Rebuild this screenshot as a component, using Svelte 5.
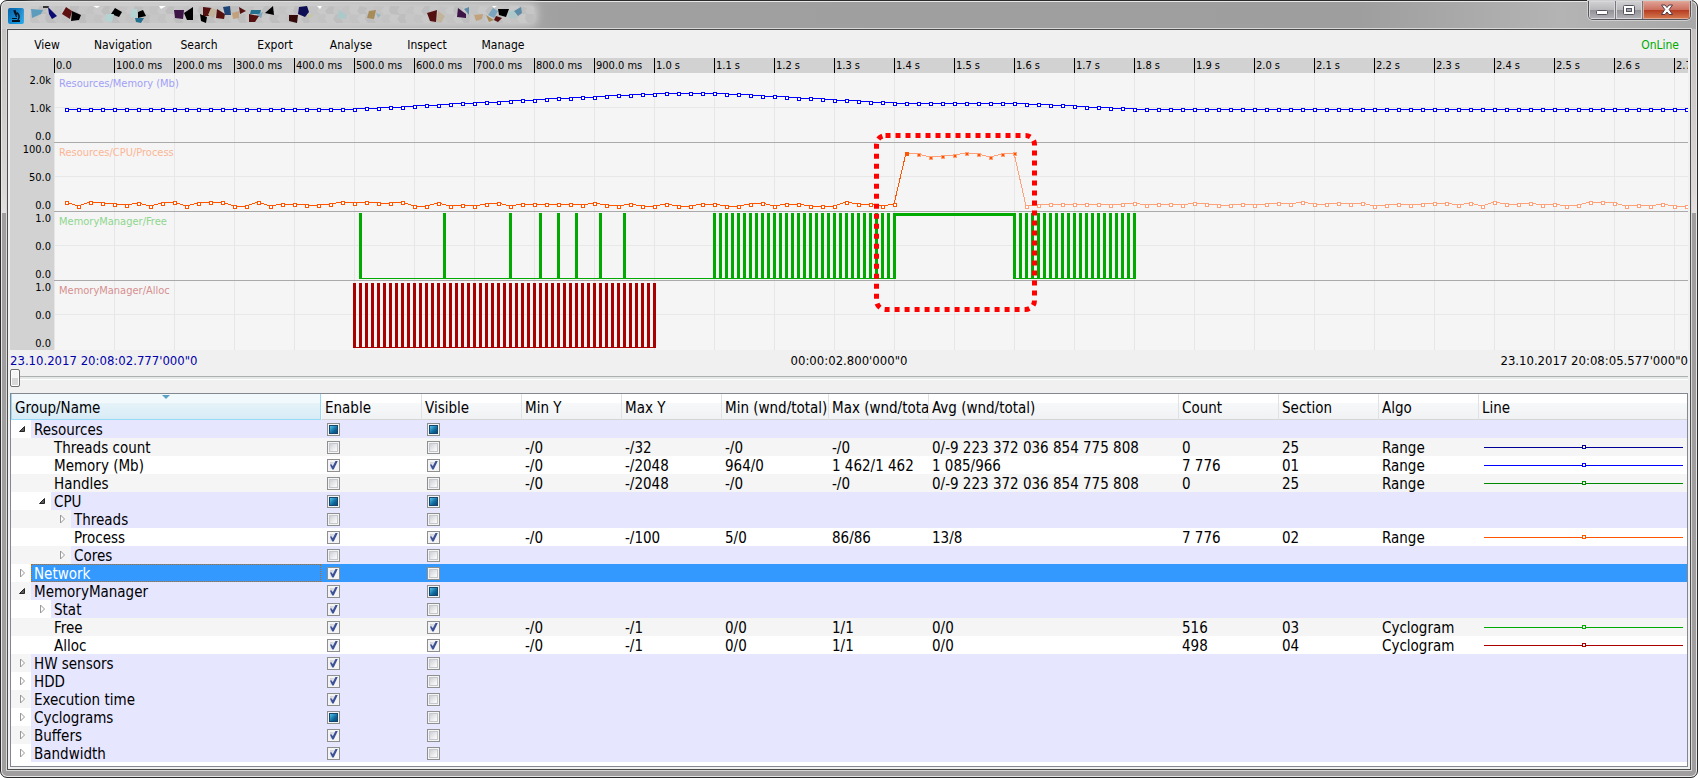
<script>
    const menu = ["View", "Navigation", "Search", "Export", "Analyse", "Inspect", "Manage"];

    // ruler: one tick every 100 ms
    const ticks = Array.from({ length: 28 }, (_, i) => {
        if (i === 0) return "0.0";
        return i < 10 ? `${i}00.0 ms` : `${(i / 10).toFixed(1)} s`;
    });

    const scales = [
        ["2.0k", "1.0k", "0.0"],
        ["100.0", "50.0", "0.0"],
        ["1.0", "0.0", "0.0"],
        ["1.0", "0.0", "0.0"]
    ];

    const panels = [
        { title: "Resources/Memory (Mb)", color: "#9f9ff5" },
        { title: "Resources/CPU/Process", color: "#fbb596" },
        { title: "MemoryManager/Free", color: "#8fd68f" },
        { title: "MemoryManager/Alloc", color: "#d69090" }
    ];
    const panelHeight = 69;
    const step = 12;

    function memoryY(k) {
        if (k <= 25) return 36;
        if (k <= 50) return 36 - (k - 25) * 0.62;
        if (k <= 55) return 20;
        if (k <= 70) return 20 + (k - 55) * 0.67;
        if (k <= 80) return 30;
        if (k <= 90) return 30 + (k - 80) * 0.6;
        return 36;
    }

    // idle load, one digit for each sample, higher digit = lower on screen
    const idleBefore =
        "0401231410" + "4100440422" + "3320101104" + "4143421422" +
        "2223134244" + "2442244214" + "2244402242";
    const idleAfter = "4322222" + "3213223123323212" + "022121" + "43232" + "11314" + "02213" + "24300" + "1434244";
    const load = [0, 1, 4, 3, 2, 0, 1, 4, 1, 0];

    const memory = Array.from({ length: 136 }, (_, i) => ({
        x: (i + 1) * step,
        y: Math.round(memoryY(i + 1))
    }));

    const cpu = memory.map(({ x }, i) => {
        if (i >= 70 && i < 80) return { x, y: 80 + load[i - 70] };
        const digit = i < 70 ? idleBefore[i] : idleAfter[i - 80];
        return { x, y: 129 + Number(digit) };
    });

    const toPoints = (list) => list.map((p) => `${p.x},${p.y}`).join(" ");

    const range = (from, to) => {
        const out = [];
        for (let x = from; x <= to; x += 6) out.push(x);
        return out;
    };
    const freeBars = [306, 390, 456, 486, 504, 522, 546, 570, ...range(660, 840), ...range(960, 1080)];
    const allocBars = range(300, 600);

    const columns = [
        "Group/Name", "Enable", "Visible", "Min Y", "Max Y", "Min (wnd/total)",
        "Max (wnd/total)", "Avg (wnd/total)", "Count", "Section", "Algo", "Line"
    ];

    // enable / visible: 0 = off, 1 = on, 2 = partly
    let rows = [
        { name: "Resources", level: 0, open: true, enable: 2, visible: 2 },
        { name: "Threads count", level: 1, enable: 0, visible: 0, line: "#000099", values: ["-/0", "-/32", "-/0", "-/0", "0/-9 223 372 036 854 775 808", "0", "25", "Range"] },
        { name: "Memory (Mb)", level: 1, enable: 1, visible: 1, line: "#0000ff", values: ["-/0", "-/2048", "964/0", "1 462/1 462", "1 085/966", "7 776", "01", "Range"] },
        { name: "Handles", level: 1, enable: 0, visible: 0, line: "#008800", values: ["-/0", "-/2048", "-/0", "-/0", "0/-9 223 372 036 854 775 808", "0", "25", "Range"] },
        { name: "CPU", level: 1, open: true, enable: 2, visible: 2 },
        { name: "Threads", level: 2, open: false, enable: 0, visible: 0 },
        { name: "Process", level: 2, enable: 1, visible: 1, line: "#ff5500", values: ["-/0", "-/100", "5/0", "86/86", "13/8", "7 776", "02", "Range"] },
        { name: "Cores", level: 2, open: false, enable: 0, visible: 0 },
        { name: "Network", level: 0, open: false, enable: 1, visible: 0, selected: true },
        { name: "MemoryManager", level: 0, open: true, enable: 1, visible: 2 },
        { name: "Stat", level: 1, open: false, enable: 1, visible: 0 },
        { name: "Free", level: 1, enable: 1, visible: 1, line: "#00aa00", values: ["-/0", "-/1", "0/0", "1/1", "0/0", "516", "03", "Cyclogram"] },
        { name: "Alloc", level: 1, enable: 1, visible: 1, line: "#aa0000", values: ["-/0", "-/1", "0/0", "1/1", "0/0", "498", "04", "Cyclogram"] },
        { name: "HW sensors", level: 0, open: false, enable: 1, visible: 0 },
        { name: "HDD", level: 0, open: false, enable: 1, visible: 0 },
        { name: "Execution time", level: 0, open: false, enable: 1, visible: 0 },
        { name: "Cyclograms", level: 0, open: false, enable: 2, visible: 0 },
        { name: "Buffers", level: 0, open: false, enable: 1, visible: 0 },
        { name: "Bandwidth", level: 0, open: false, enable: 1, visible: 0 }
    ];

    let position = 0;

    // scrambled caption: pale cells below, coloured shards on top
    const greys = ["#c9c9c9", "#c3c3c3", "#d3d3d3", "#c6c6c6", "#cdcdcd", "#bebebe", "#d6d6d6"];
    const cells = Array.from({ length: 126 }, (_, i) => {
        const x = (i % 63) * 8;
        const y = i < 63 ? 0 : 8;
        const j = (i * 7) % 5;
        return {
            fill: greys[(i * 5 + (i >> 2)) % greys.length],
            points: `${x + j},${y} ${x + 9},${y + (j % 3)} ${x + 11 - j},${y + 9} ${x + 3},${y + 10} ${x - 1},${y + 5}`
        };
    });
    const shards = [
        ["#5c9cbd", "1,3 13,4 11,8 2,12"],
        ["#333", "13,0 19,0 18,2 13,2"],
        ["#0b0b72", "18,1 27,10 22,13 19,8"],
        ["#5e1010", "32,8 36,1 42,5 40,13"],
        ["#000", "42,5 51,9 49,14 41,15"],
        ["#000", "85,2 92,6 89,11 81,8"],
        ["#b4d3d3", "76,8 84,8 82,16 75,15"],
        ["#b4d3d3", "102,3 107,3 107,12 100,11"],
        ["#000", "108,6 113,4 116,10 108,12"],
        ["#26708f", "105,12 114,12 111,17 106,16"],
        ["#fff", "63,0 70,0 67,2"],
        ["#fff", "129,0 136,0 131,3"],
        ["#3c1445", "144,4 154,4 153,13 145,12"],
        ["#000", "154,7 163,1 163,14 157,14"],
        ["#551010", "173,1 182,2 179,10 173,10"],
        ["#000", "170,8 177,11 176,17 171,15"],
        ["#c2b39b", "181,2 187,4 184,12 178,9"],
        ["#551010", "187,3 195,8 194,13 186,12"],
        ["#1f4577", "193,1 200,0 201,9 195,9"],
        ["#c2a27c", "202,7 209,5 209,12 203,13"],
        ["#551010", "209,1 216,5 210,8"],
        ["#26708f", "221,4 231,4 230,8 220,8"],
        ["#7ba5be", "226,9 233,6 231,12"],
        ["#551010", "219,8 229,10 225,16 219,16"],
        ["#000", "243,0 244,9 235,7"],
        ["#330b0b", "259,9 268,9 267,17 259,15"],
        ["#0e0e55", "269,1 277,0 279,6 275,11 268,8"],
        ["#fff", "287,0 292,0 290,3"],
        ["#c5c5a5", "277,8 284,9 279,13"],
        ["#adc8c8", "309,4 317,9 316,13 307,12"],
        ["#a78c5a", "339,5 346,4 344,13 337,12"],
        ["#96b4c2", "346,7 351,9 348,12"],
        ["#551010", "397,7 407,4 406,16 400,15"],
        ["#c2b39b", "408,5 415,10 411,17 407,15"],
        ["#3c1445", "428,2 436,8 436,12 427,11"],
        ["#5c8ba8", "434,3 439,1 439,9"],
        ["#c2a27c", "444,9 453,8 452,13 446,15"],
        ["#7ba5be", "458,9 463,2 468,5 464,12"],
        ["#fff", "462,0 467,0 464,2"],
        ["#000", "468,3 479,3 476,11 469,9"],
        ["#551010", "466,10 472,12 468,16 464,14"],
        ["#a78c5a", "456,9 464,14 459,16"],
        ["#adc8c8", "478,6 484,4 487,12 479,12"],
        ["#5c8ba8", "484,5 491,1 492,7 488,10"]
    ];
</script>

<div class="window">
    <header class="titlebar">
        <svg class="app-icon" width="16" height="16" viewBox="0 0 16 16" aria-hidden="true">
            <defs>
                <linearGradient id="icon-fill" x1="0" y1="0" x2="1" y2="1">
                    <stop offset="0" stop-color="#0a62a8" />
                    <stop offset="1" stop-color="#19a8f0" />
                </linearGradient>
            </defs>
            <rect width="16" height="16" rx="2" fill="url(#icon-fill)" />
            <g fill="#04121f">
                <path d="M5.200 2.600 L7.400 1.700 L9.600 7.200 L7.400 8.100 Z" />
                <path d="M7.500 8.300 L8.900 7.700 L9.200 8.800 L8 9.200 Z" />
                <rect x="4" y="10" width="5" height="1" />
                <rect x="4" y="12" width="8" height="2" />
            </g>
            <path d="M9 4.500 Q12.600 7.500 10 12" fill="none" stroke="#04121f" stroke-width="1.500" />
        </svg>
        <svg class="caption" width="504" height="17" aria-hidden="true">
            {#each cells as cell}
                <polygon points={cell.points} fill={cell.fill} />
            {/each}
            {#each shards as [fill, points]}
                <polygon {points} {fill} />
            {/each}
        </svg>
        <div class="window-buttons">
            <button class="min" aria-label="Minimize">
                <svg width="14" height="12"><rect x="1.500" y="6.500" width="11" height="4" rx="1" fill="#fff" stroke="#53535f" /></svg>
            </button>
            <button class="max" aria-label="Maximize">
                <svg width="14" height="12"><rect x="1.500" y="1.500" width="11" height="9" rx="1" fill="#fff" stroke="#53535f" /><rect x="4.500" y="4.500" width="5" height="3" fill="#a4a4ac" stroke="#53535f" /></svg>
            </button>
            <button class="close" aria-label="Close">
                <svg width="14" height="12"><path d="M1.500 1 H5 L7 3.500 L9 1 H12.500 L9.200 5.500 L12.500 10.500 H9 L7 8 L5 10.500 H1.500 L4.800 5.500 Z" fill="#fff" stroke="#533a44" /></svg>
            </button>
        </div>
    </header>

    <main class="client">
        <nav class="menu">
            {#each menu as item}
                <button>{item}</button>
            {/each}
            <span class="status">OnLine</span>
        </nav>

        <section class="chart">
            <div class="ruler">
                {#each ticks as tick}
                    <span>{tick}</span>
                {/each}
            </div>
            <div class="scales">
                {#each scales as scale}
                    <div class="scale">
                        {#each scale as value}
                            <span>{value}</span>
                        {/each}
                    </div>
                {/each}
            </div>
            <svg class="plot" height="277">
                {#each ticks as _, i}
                    <rect x={i * 60} y="0" width="1" height="277" fill="#e6e6e6" />
                {/each}
                {#each panels as panel, i}
                    <rect x="0" y={i * panelHeight + 34} width="100%" height="1" fill="#e8e8e8" />
                    {#if i > 0}
                        <rect x="0" y={i * panelHeight} width="100%" height="1" fill="#aaa" />
                    {/if}
                    <text x="5" y={i * panelHeight + 14} fill={panel.color}>{panel.title}</text>
                {/each}

                <g stroke="#0000ff">
                    <polyline points={toPoints(memory)} fill="none" />
                    {#each memory as p}
                        <rect x={p.x - 1} y={p.y - 1} width="3" height="3" fill="#fff" />
                    {/each}
                </g>

                <polyline points={toPoints(cpu.slice(0, 71))} fill="none" stroke="#ff5500" />
                <polyline points={toPoints(cpu.slice(70))} fill="none" stroke="#ffa27a" />
                {#each cpu as p, i}
                    <rect
                        x={p.x - 1}
                        y={p.y - 1}
                        width="3"
                        height="3"
                        stroke={i > 70 ? "#ffa27a" : "#ff5500"}
                        fill={i >= 70 && i < 80 ? "#ff5500" : "#fff"}
                    />
                {/each}

                <g fill="#00aa00" stroke="none">
                    {#each freeBars as x}
                        <rect x={x - 1} y="140" width="3" height="66" />
                    {/each}
                    <rect x="306" y="205" width="534" height="1" />
                    <rect x="960" y="205" width="120" height="1" />
                    <rect x="840" y="140" width="120" height="3" />
                </g>

                <g fill="#aa0000" stroke="none">
                    {#each allocBars as x}
                        <rect x={x - 1} y="210" width="3" height="65" />
                    {/each}
                    <rect x="300" y="274" width="300" height="1" />
                </g>

                <rect class="selection" x="822.5" y="62.5" width="158" height="174" rx="9" />
            </svg>
        </section>

        <div class="times">
            <span class="from">23.10.2017 20:08:02.777'000"0</span>
            <span>00:00:02.800'000"0</span>
            <span class="to">23.10.2017 20:08:05.577'000"0</span>
        </div>

        <input class="slider" type="range" min="0" max="100" aria-label="Position" bind:value={position} />

        <div class="table-box">
            <table>
                <colgroup>
                    <col class="c-name" />
                    <col /><col /><col /><col />
                    <col class="c-min" />
                    <col />
                    <col class="c-avg" />
                    <col /><col /><col />
                    <col class="c-line" />
                </colgroup>
                <thead>
                    <tr>
                        {#each columns as column, i}
                            <th class:sorted={i === 0}>{column}</th>
                        {/each}
                    </tr>
                </thead>
                <tbody>
                    {#each rows as row, i}
                        <tr class:odd={i % 2 === 1} class:group={!row.values} class:selected={row.selected}>
                            <td class="name">
                                <div class="tree">
                                    <div class="branch" style="width: {(row.level + 1) * 20}px">
                                        {#if !row.values}
                                            <button class="expander" aria-label="Toggle {row.name}">
                                                <svg width="8" height="10">
                                                    {#if row.open}
                                                        <path d="M6.500 2.500 V7.500 H1.500 Z" fill="#595959" stroke="#262626" />
                                                    {:else}
                                                        <path d="M2.500 1 V9 L6.500 5 Z" fill="#fff" stroke="#989898" />
                                                    {/if}
                                                </svg>
                                            </button>
                                        {/if}
                                    </div>
                                    <span class="label">{row.name}</span>
                                </div>
                            </td>
                            <td class="check">
                                <input type="checkbox" aria-label="Enable {row.name}" checked={row.enable === 1} indeterminate={row.enable === 2} />
                            </td>
                            <td class="check">
                                <input type="checkbox" aria-label="Show {row.name}" checked={row.visible === 1} indeterminate={row.visible === 2} />
                            </td>
                            {#if row.values}
                                {#each row.values as value}
                                    <td>{value}</td>
                                {/each}
                                <td class="line">
                                    <svg width="100%" height="5">
                                        <rect x="0" y="2" width="100%" height="1" fill={row.line} />
                                        <svg x="50%" width="5" height="5" overflow="visible">
                                            <rect x="-1.500" y=".5" width="3" height="3" fill="#fff" stroke={row.line} />
                                        </svg>
                                    </svg>
                                </td>
                            {:else}
                                <td colspan="9"></td>
                            {/if}
                        </tr>
                    {/each}
                </tbody>
            </table>
        </div>
    </main>
</div>

<style>
    :global(body) {
        background: #fff;
        font-family: "DejaVu Sans Condensed", "DejaVu Sans", Tahoma, sans-serif;
        font-size: 12px;
        color: #000;
    }

    .window {
        box-sizing: border-box;
        min-height: 100vh;
        display: flex;
        flex-direction: column;
        padding: 0 6px 7px;
        border: 1px solid #2b2b2b;
        border-radius: 7px;
        box-shadow: inset 0 0 0 1px #e8e8e8;
        background:
            linear-gradient(90deg, #cdcdcd 0, #c4c4c4 300px, #a0a0a0 560px, #9e9e9e 80%, #b4b4b4 92%, #a8a8a8) top / 100% 28px no-repeat,
            linear-gradient(#c2bebe 0, #dcd8d8 190px, #e4e0e0 212px, #a09e9e 212px);
    }

    .titlebar {
        height: 28px;
        display: flex;
        align-items: flex-start;
    }

    .app-icon {
        margin: 7px 6px 0 1px;
    }

    .caption {
        margin-top: 5px;
        border-radius: 3px;
        background: #c6c6c6;
        box-shadow: 0 0 8px 3px #cfcfcf;
    }

    .window-buttons {
        display: flex;
        margin-left: auto;
        border: 1px solid #55555c;
        border-top: none;
        border-radius: 0 0 5px 5px;
        overflow: hidden;
        box-shadow: 0 0 0 1px #cfcfcf;
    }

    .window-buttons button {
        display: flex;
        align-items: center;
        justify-content: center;
        width: 27px;
        height: 18px;
        padding: 0;
        border: none;
        border-right: 1px solid #77777e;
        background: linear-gradient(#d2d2d4, #b9b9bc 48%, #919196 50%, #b4b4b8);
        box-shadow: inset 0 0 0 1px #d8d8dc;
    }

    .window-buttons .close {
        width: 47px;
        border-right: none;
        background: linear-gradient(#e0a498, #cc6f5e 48%, #b43a20 50%, #d77c50);
        box-shadow: inset 0 0 0 1px #e3a797;
    }

    .client {
        flex: 1;
        display: flex;
        flex-direction: column;
        padding: 0 2px 2px;
        border: 1px solid #4c4c4c;
        box-shadow: 0 0 0 1px #d8d8d8;
        background: #f0f0f0;
    }

    .menu {
        display: flex;
        align-items: center;
        height: 28px;
    }

    .menu button {
        width: 76px;
        padding: 2px 2px 0 0;
        border: none;
        background: none;
        font: inherit;
        color: inherit;
    }

    .status {
        margin-left: auto;
        padding: 2px 9px 0 0;
        color: #00aa00;
    }

    .chart {
        display: grid;
        grid-template-columns: 44px minmax(0, 1fr);
        background: #d2d2d2;
        font-size: 11px;
    }

    .ruler {
        grid-column: 2;
        display: flex;
        height: 15px;
        overflow: hidden;
        line-height: 16px;
    }

    .ruler span {
        box-sizing: border-box;
        flex: 0 0 60px;
        padding-left: 1px;
        border-left: 1px solid #000;
        white-space: nowrap;
    }

    .scale {
        box-sizing: border-box;
        display: flex;
        flex-direction: column;
        gap: 14px;
        height: 69px;
        padding: 1px 3px 0 0;
        line-height: 14px;
        text-align: right;
    }

    .scale span {
        flex-shrink: 0;
    }

    .plot {
        display: block;
        width: 100%;
        background: #f5f5f5;
        shape-rendering: crispEdges;
    }

    .selection {
        fill: none;
        stroke: #ff0000;
        stroke-width: 5;
        stroke-dasharray: 5 5;
        shape-rendering: auto;
    }

    .times {
        display: grid;
        grid-template-columns: 1fr auto 1fr;
        height: 19px;
        font-size: 13px;
        line-height: 21px;
    }

    .from {
        color: #0000aa;
    }

    .to {
        text-align: right;
    }

    .slider {
        appearance: none;
        width: 100%;
        height: 18px;
        margin: 0 0 6px;
        background: none;
    }

    .slider::-webkit-slider-runnable-track {
        height: 4px;
        border-top: 1px solid #aeb0af;
        border-bottom: 1px solid #fff;
        box-sizing: border-box;
        background: #e4e9e8;
    }

    .slider::-webkit-slider-thumb {
        appearance: none;
        box-sizing: border-box;
        width: 10px;
        height: 18px;
        margin-top: -8px;
        border: 1px solid #6e6e6e;
        border-radius: 2px;
        background: linear-gradient(#f6f6f6 50%, #d8d8d8 50%);
        box-shadow: inset 0 0 0 1px #fff;
    }

    .table-box {
        flex: 1;
        border: 1px solid #828790;
        background: #fff;
        font-size: 15px;
    }

    table {
        width: 100%;
        table-layout: fixed;
        border-collapse: separate;
        border-spacing: 0;
    }

    col {
        width: 100px;
    }

    .c-name {
        width: 310px;
    }

    .c-min {
        width: 107px;
    }

    .c-avg {
        width: 250px;
    }

    .c-line {
        width: auto;
    }

    th {
        box-sizing: border-box;
        height: 26px;
        padding: 2px 3px 0;
        overflow: hidden;
        border-left: 1px solid #e0e2e4;
        border-bottom: 1px solid #d5d5d5;
        background: linear-gradient(#fff 36%, #f7f8fa 36%, #f1f2f4);
        font-weight: normal;
        text-align: left;
        white-space: nowrap;
    }

    th.sorted {
        position: relative;
        border: 1px solid #96d9f9;
        border-top: none;
        background: linear-gradient(#f2f9fc 36%, #e6f3f9 36%, #d8ecf6);
    }

    th.sorted + th {
        border-left-color: #fff;
    }

    th.sorted::after {
        content: "";
        position: absolute;
        top: 1px;
        left: 50%;
        margin-left: -4px;
        border: 4px solid transparent;
        border-top-color: #5a9fc4;
        border-bottom: none;
    }

    td {
        height: 18px;
        padding: 0 0 0 4px;
        line-height: 18px;
        white-space: nowrap;
    }

    /* text sits one pixel low in its row */
    td:not(.name, .check, .line) {
        box-sizing: border-box;
        padding-top: 2px;
        line-height: 16px;
    }

    .odd td {
        background: #f5f5f5;
    }

    .group td,
    .group .label {
        background: #e6e6ff;
    }

    .group td.name {
        background: #fff;
    }

    .group.odd td.name {
        background: #f5f5f5;
    }

    .selected td:not(.name),
    .selected .label {
        background: #3399ff;
        color: #fff;
    }

    .selected .label {
        outline: 1px dotted #cc6600;
        outline-offset: -1px;
    }

    td.name {
        padding: 0;
    }

    .tree {
        display: flex;
        height: 18px;
    }

    .branch {
        display: flex;
        justify-content: flex-end;
    }

    .expander {
        display: flex;
        align-items: center;
        justify-content: center;
        width: 18px;
        padding: 0;
        border: none;
        background: none;
    }

    .label {
        flex: 1;
        padding: 2px 0 0 3px;
        line-height: 16px;
    }

    td.check {
        padding-left: 6px;
    }

    td.check input {
        appearance: none;
        display: block;
        box-sizing: border-box;
        position: relative;
        width: 13px;
        height: 13px;
        margin: 0;
        border: 1px solid #8e8f8f;
        background: linear-gradient(135deg, #cdd0d6, #f6f6f6 80%) content-box, #f4f4f4;
        padding: 2px;
    }

    td.check input:indeterminate {
        background: linear-gradient(135deg, #54c2ec, #0e6a9c 60%, #0a4a78) content-box, #f4f4f4;
    }

    td.check input:not(:checked, :indeterminate)::after {
        content: "";
        position: absolute;
        inset: 1px;
        border: 1px solid #c4c7cc;
    }

    td.check input:indeterminate::after {
        content: "";
        position: absolute;
        inset: 1px;
        border: 1px solid #14466e;
    }

    td.check input:checked::after {
        content: "";
        position: absolute;
        inset: 1px;
        background: #3b5096;
        clip-path: polygon(10% 45%, 30% 45%, 42% 65%, 75% 0, 100% 0, 52% 100%, 36% 100%);
    }

    td.line {
        padding: 0 4px 0 6px;
    }

    td.line svg {
        display: block;
        shape-rendering: crispEdges;
    }
</style>
